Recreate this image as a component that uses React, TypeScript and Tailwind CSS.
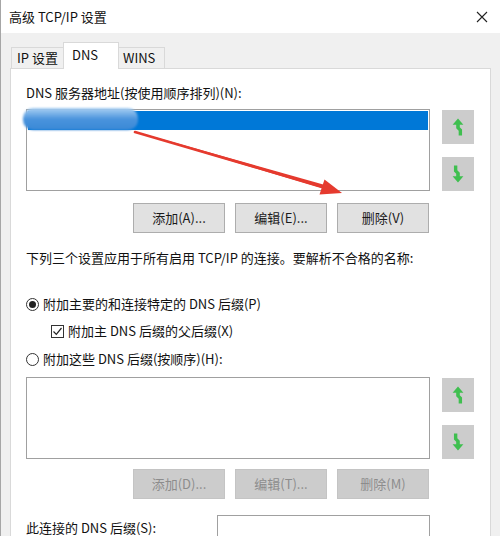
import React from "react";

function UpArrow() {
  return (
    <svg width="12" height="18" viewBox="0 0 10 16">
      <polygon points="5,0.5 9.8,6 6.6,6 6.6,8.2 8.6,10.2 8.6,15.5 5.6,15.5 5.6,11.3 3.4,9.2 3.4,6 0.2,6" fill="#3fbf4f" />
    </svg>
  );
}

function DownArrow() {
  return (
    <svg width="12" height="18" viewBox="0 0 10 16">
      <polygon points="5,15.5 9.8,10 6.6,10 6.6,6.8 4.4,4.7 4.4,0.5 1.4,0.5 1.4,5.8 3.4,7.8 3.4,10 0.2,10" fill="#3fbf4f" />
    </svg>
  );
}

function SideButtons() {
  return (
    <div className="flex flex-col gap-[13px] pt-px">
      <div className="w-[32px] h-[34px] bg-[#cccccc] flex items-center justify-center">
        <UpArrow />
      </div>
      <div className="w-[32px] h-[34px] bg-[#cccccc] flex items-center justify-center">
        <DownArrow />
      </div>
    </div>
  );
}

function Btn({ label, disabled }: { label: string; disabled?: boolean }) {
  return (
    <div
      className={
        disabled
          ? "w-[92px] h-[30px] bg-[#cccccc] border border-[#c4c4c4] text-[#8c8c8c] flex items-center justify-center"
          : "w-[92px] h-[30px] bg-[#e1e1e1] border border-[#adadad] text-[#1a1a1a] flex items-center justify-center"
      }
    >
      {label}
    </div>
  );
}

export default function App() {
  return (
    <div className="relative w-[500px] h-[536px] overflow-hidden bg-[#f0f0f0] border-l border-[#a6a6a6] text-[13px] leading-[18px] text-[#111] font-['Noto_Sans_CJK_SC','Microsoft_YaHei',sans-serif]">
      {/* Title bar */}
      <div className="h-[33px] bg-white flex items-center justify-between pl-[8px] pr-[12px]">
        <span className="text-[13px]">高级 TCP/IP 设置</span>
        <svg width="12" height="12" viewBox="0 0 12 12">
          <path d="M1 1 L11 11 M11 1 L1 11" stroke="#222" strokeWidth="1.1" />
        </svg>
      </div>

      {/* Tabs */}
      <div className="pt-[9px] pl-[10px] flex items-end">
        <div className="w-[53px] h-[21px] bg-[#f0f0f0] border border-b-0 border-[#d9d9d9] flex items-center pl-[5px] -mr-px">
          IP 设置
        </div>
        <div className="relative z-10 w-[56px] h-[27px] -mb-px bg-white border border-b-0 border-[#d9d9d9] flex items-start pt-[3px] pl-[8px]">
          DNS
        </div>
        <div className="w-[47px] h-[21px] bg-[#f0f0f0] border border-b-0 border-[#d9d9d9] flex items-center pl-[4px] -ml-px">
          WINS
        </div>
      </div>

      {/* Panel */}
      <div className="ml-[9px] w-[481px] h-[480px] bg-white border border-[#d9d9d9] pl-[15px] pt-[15px]">
        <div>DNS 服务器地址(按使用顺序排列)(N):</div>

        <div className="mt-[7px] flex gap-[12px]">
          <div className="w-[404px] h-[82px] border border-[#a0a0a0] bg-white p-px">
            <div className="h-[19px] bg-[#0078d7]" />
          </div>
          <SideButtons />
        </div>

        <div className="mt-[12px] ml-[107px] flex gap-[10px]">
          <Btn label="添加(A)..." />
          <Btn label="编辑(E)..." />
          <Btn label="删除(V)" />
        </div>

        <div className="mt-[16px]">下列三个设置应用于所有启用 TCP/IP 的连接。要解析不合格的名称:</div>

        <div className="mt-[28px] flex items-center gap-[4px]">
          <div className="w-[13px] h-[13px] rounded-full border border-[#333] flex items-center justify-center">
            <div className="w-[7px] h-[7px] rounded-full bg-[#222]" />
          </div>
          <span>附加主要的和连接特定的 DNS 后缀(P)</span>
        </div>

        <div className="mt-[9px] ml-[25px] flex items-center gap-[4px]">
          <div className="w-[13px] h-[13px] border border-[#333] flex items-center justify-center">
            <svg width="11" height="11" viewBox="0 0 11 11">
              <path d="M1.5 5.5 L4.3 8.3 L9.5 2" stroke="#222" strokeWidth="1.2" fill="none" />
            </svg>
          </div>
          <span>附加主 DNS 后缀的父后缀(X)</span>
        </div>

        <div className="mt-[10px] flex items-center gap-[4px]">
          <div className="w-[13px] h-[13px] rounded-full border border-[#333]" />
          <span>附加这些 DNS 后缀(按顺序)(H):</span>
        </div>

        <div className="mt-[9px] flex gap-[12px]">
          <div className="w-[404px] h-[82px] border border-[#a0a0a0] bg-white" />
          <SideButtons />
        </div>

        <div className="mt-[10px] ml-[107px] flex gap-[10px]">
          <Btn label="添加(D)..." disabled />
          <Btn label="编辑(T)..." disabled />
          <Btn label="删除(M)" disabled />
        </div>

        <div className="mt-[16px] flex">
          <div className="w-[191px] pt-[4px]">此连接的 DNS 后缀(S):</div>
          <div className="w-[213px] h-[30px] border border-[#a0a0a0] bg-white" />
        </div>
      </div>

      {/* Privacy blur over the selected entry */}
      <div className="absolute left-[22px] top-[108px] w-[115px] h-[22px] rounded-[10px] bg-gradient-to-b from-[#a9d0f2] via-[#4a94dd] to-[#3a88d6] blur-[1px]" />

      {/* Red annotation arrow */}
      <svg className="absolute left-0 top-0 pointer-events-none" width="500" height="536">
        <path d="M134 131.5 L136 132.8 L323 189 L324 185 Z" fill="#e53a2e" />
        <line x1="134" y1="132" x2="324" y2="187.5" stroke="#e53a2e" strokeWidth="2.6" strokeLinecap="round" />
        <polygon points="341,193 318.5,194.5 323.5,179.5" fill="#e53a2e" />
      </svg>
    </div>
  );
}
